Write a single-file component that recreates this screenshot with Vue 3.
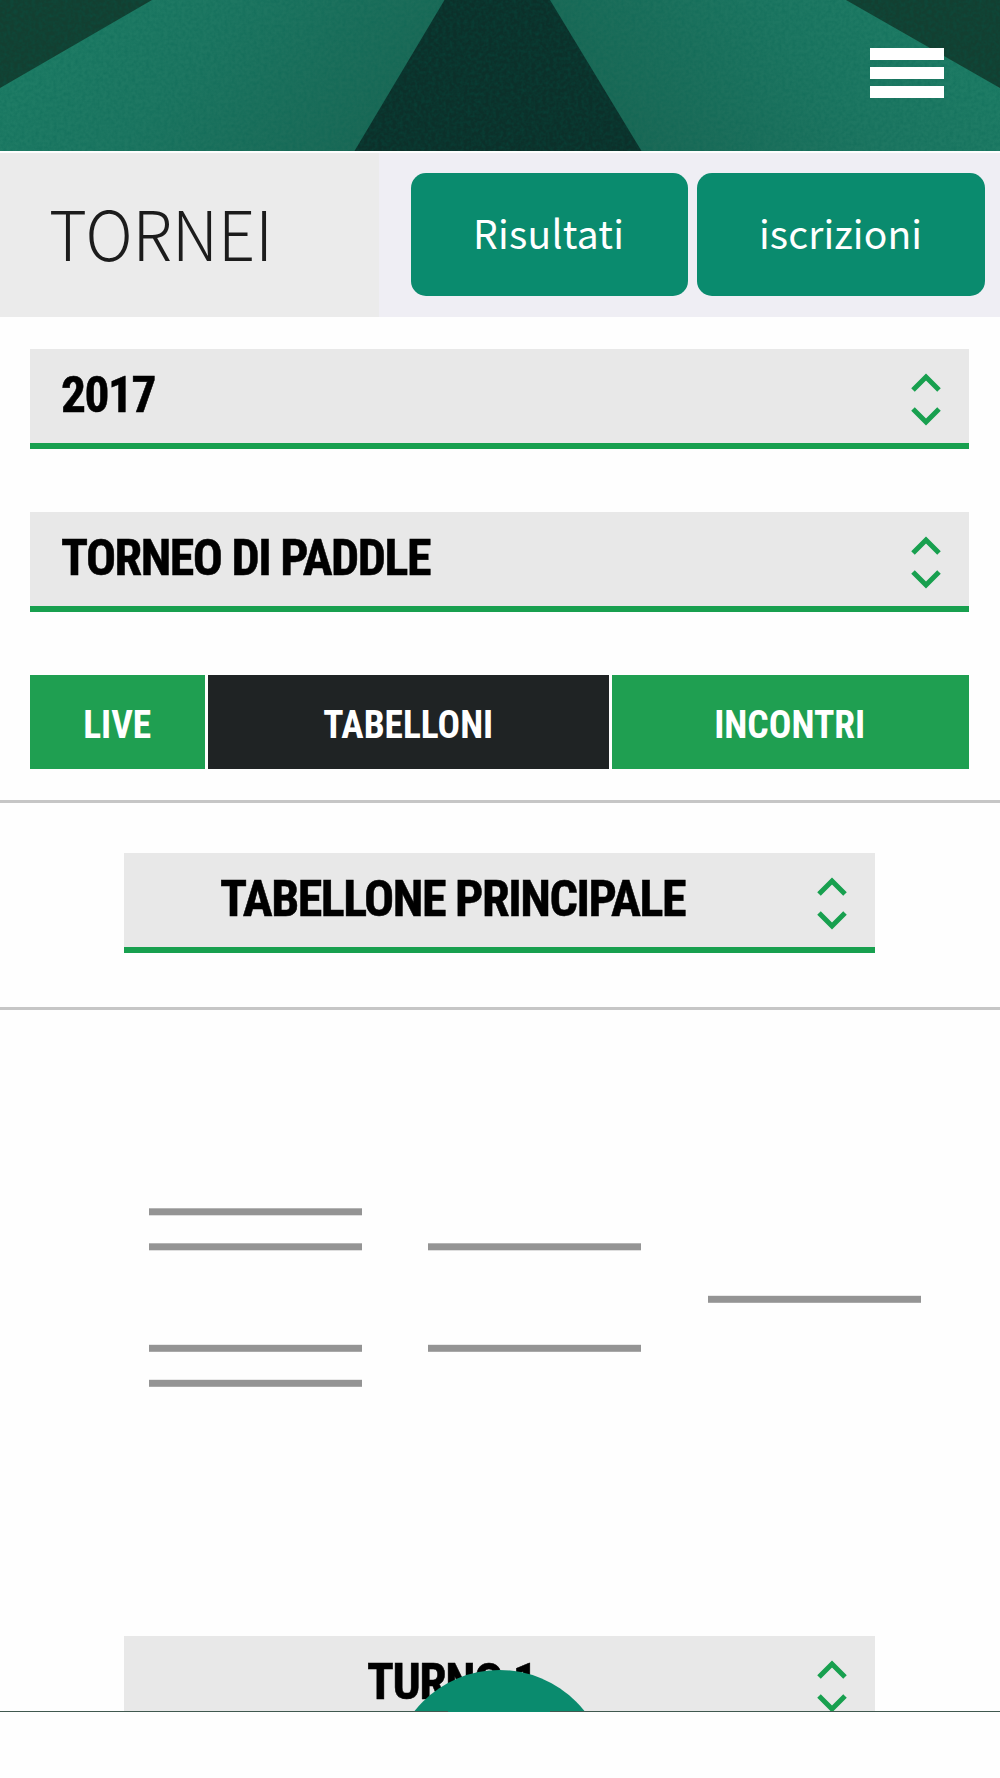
<template>
  <div class="page">
    <div class="screen">
      <!-- header with the court picture -->
      <header class="header">
        <svg class="court" viewBox="0 0 1000 151" preserveAspectRatio="none">
          <defs>
            <linearGradient id="leftPanel" x1="0" y1="0" x2="1" y2="0.25">
              <stop offset="0" stop-color="#1f7f67" />
              <stop offset="0.45" stop-color="#1e7762" />
              <stop offset="1" stop-color="#1b6654" />
            </linearGradient>
            <linearGradient id="rightPanel" x1="1" y1="0" x2="0" y2="0.25">
              <stop offset="0" stop-color="#1f7f67" />
              <stop offset="0.45" stop-color="#1e7762" />
              <stop offset="1" stop-color="#1b6654" />
            </linearGradient>
            <filter id="grain" x="0" y="0" width="100%" height="100%">
              <feTurbulence type="fractalNoise" baseFrequency="0.28" numOctaves="2" seed="4" />
              <feColorMatrix values="0 0 0 0 0  0 0 0 0 0.12  0 0 0 0 0.08  0.9 0 0 0 -0.3" />
            </filter>
          </defs>
          <rect width="500" height="151" fill="url(#leftPanel)" />
          <rect x="500" width="500" height="151" fill="url(#rightPanel)" />
          <path d="M0 0H152L0 88Z" fill="#133f31" />
          <path d="M846 0H1000V88Z" fill="#133f31" />
          <path d="M444.500 0H550L641.500 151H354.500Z" fill="#0c302a" />
          <rect width="1000" height="151" filter="url(#grain)" opacity="0.6" />
        </svg>
        <button class="burger" aria-label="Menu">
          <span></span>
          <span></span>
          <span></span>
        </button>
      </header>

      <!-- title and main actions -->
      <section class="title-bar">
        <div class="title">
          <svg class="title-text" width="250" height="106">
            <text x="3" y="80" textLength="224" lengthAdjust="spacingAndGlyphs">TORNEI</text>
          </svg>
        </div>
        <div class="actions">
          <button class="action results">
            <svg width="156" height="68"><text x="2" y="48" textLength="151">Risultati</text></svg>
          </button>
          <button class="action signup">
            <svg width="166" height="68"><text x="1" y="48" textLength="163">iscrizioni</text></svg>
          </button>
        </div>
      </section>

      <!-- filters -->
      <section class="filters">
        <div v-for="f in filters" :key="f.label" class="select">
          <svg class="select-text" :width="f.width + 8" height="74">
            <text x="0" y="55.5" :textLength="f.width" lengthAdjust="spacingAndGlyphs">{{ f.label }}</text>
          </svg>
          <svg class="arrows" viewBox="0 0 30 51"><path d="M2 16L15 3L28 16M2 35L15 48L28 35" /></svg>
        </div>
      </section>

      <!-- tabs -->
      <nav class="tabs">
        <button
          v-for="t in tabs"
          :key="t.label"
          class="tab"
          :class="[t.cls, { active: current === t.label }]"
          @click="current = t.label"
        >
          <svg :width="t.width + 6" height="58">
            <text x="2.2" y="44.5" :textLength="t.width" lengthAdjust="spacingAndGlyphs">{{ t.label }}</text>
          </svg>
        </button>
      </nav>

      <section class="board">
        <div class="select centered">
          <svg class="select-text" width="474" height="74">
            <text x="0" y="55.5" textLength="465" lengthAdjust="spacingAndGlyphs">TABELLONE PRINCIPALE</text>
          </svg>
          <svg class="arrows" viewBox="0 0 30 51"><path d="M2 16L15 3L28 16M2 35L15 48L28 35" /></svg>
        </div>
      </section>

      <!-- empty draw: one line for each slot -->
      <svg class="bracket" viewBox="0 0 1000 626">
        <rect v-for="(s, i) in slots" :key="i" :x="s[0]" :y="s[1]" width="213" height="7" />
      </svg>

      <div class="select centered round">
        <svg class="select-text" width="178" height="74">
          <text x="0" y="55.5" textLength="169" lengthAdjust="spacingAndGlyphs">TURNO 1</text>
        </svg>
        <svg class="arrows" viewBox="0 0 30 51"><path d="M2 16L15 3L28 16M2 35L15 48L28 35" /></svg>
      </div>

      <div class="fab"></div>
    </div>
    <div class="edge"></div>
  </div>
</template>

<script setup>
import { ref } from 'vue'

const current = ref('TABELLONI')

const filters = [
  { label: '2017', width: 94 },
  { label: 'TORNEO DI PADDLE', width: 369 }
]

const tabs = [
  { label: 'LIVE', cls: 'live', width: 68 },
  { label: 'TABELLONI', cls: 'draws', width: 170 },
  { label: 'INCONTRI', cls: 'matches', width: 151 }
]

// x, y of every slot line in the draw
const slots = [
  [149, 198.3],
  [149, 233.3],
  [149, 334.8],
  [149, 369.8],
  [428, 233.3],
  [428, 334.8],
  [708, 285.8]
]
</script>

<style>
body {
  margin: 0;
  background: #fefefe;
}
</style>

<style scoped>
* {
  box-sizing: border-box;
}
.page {
  width: 1000px;
  height: 1778px;
  background: #fefefe;
  overflow: hidden;
}
.screen {
  position: relative;
  height: 1711px;
  overflow: hidden;
}
button {
  border: 0;
  padding: 0;
  cursor: pointer;
}
svg {
  display: block;
  flex: none;
  overflow: visible;
}

/* header */
.header {
  position: relative;
  height: 151px;
}
.court {
  width: 100%;
  height: 100%;
  overflow: hidden;
}
.burger {
  position: absolute;
  top: 48px;
  right: 56px;
  width: 74px;
  display: flex;
  flex-direction: column;
  gap: 7px;
  background: none;
}
.burger span {
  height: 12px;
  background: #fff;
}

/* title */
.title-bar {
  display: flex;
  height: 164px;
  margin-top: 2px;
}
.title {
  width: 379px;
  padding: 28px 0 0 46px;
  background: #ebebeb;
}
.title-text text {
  font-family: "Noto Sans CJK SC", sans-serif;
  font-size: 68px;
  font-weight: 200;
  fill: #1c1c1c;
}
.actions {
  flex: 1;
  display: flex;
  gap: 9px;
  padding: 20px 15px 0 32px;
  background: #efeef4;
}
.action {
  display: flex;
  align-items: center;
  justify-content: center;
  height: 123px;
  border-radius: 15px;
  background: #0a8b6e;
}
.action text {
  font-family: "Noto Sans CJK SC", sans-serif;
  font-size: 39px;
  fill: #fff;
}
.results {
  width: 276.500px;
}
.signup {
  width: 288px;
}

/* selects */
.filters {
  padding: 32px 31px 0 30px;
}
.select {
  display: flex;
  justify-content: space-between;
  height: 100px;
  margin-bottom: 63px;
  padding: 7px 28px 0 31px;
  background: #e8e8e8;
  border-bottom: 6px solid #18a04f;
}
.select text {
  font-family: "Roboto Condensed", Roboto, sans-serif;
  font-stretch: 75%;
  font-size: 50px;
  font-weight: 700;
  letter-spacing: -1.5px;
  fill: #000;
  stroke: #000;
  stroke-width: 0.5px;
}
.arrows {
  width: 30px;
  height: 51px;
  margin-top: 17.500px;
}
.arrows path {
  fill: none;
  stroke: #18a04f;
  stroke-width: 5;
}

/* tabs */
.tabs {
  display: flex;
  gap: 3px;
  margin: 0 31px 0 30px;
}
.tab {
  display: flex;
  align-items: center;
  justify-content: center;
  height: 94px;
  background: #1f9f51;
}
.tab.active {
  background: #1f2324;
}
.tab text {
  font-family: "Roboto Condensed", Roboto, sans-serif;
  font-stretch: 75%;
  font-size: 38px;
  font-weight: 700;
  fill: #fff;
}
.live {
  width: 175px;
}
.draws {
  width: 401px;
}
.matches {
  width: 357px;
}

/* board */
.board {
  height: 210px;
  margin-top: 31px;
  padding-top: 50px;
  border-top: 3px solid #c6c6c6;
  border-bottom: 3px solid #c6c6c6;
}
.centered {
  width: 751.500px;
  margin: 0 0 0 123.500px;
  padding-left: 96.500px;
}
.bracket {
  width: 1000px;
  height: 626px;
}
.bracket rect {
  fill: #949494;
}
.round {
  padding-left: 243.500px;
}
.fab {
  position: absolute;
  top: 1670px;
  left: 391px;
  width: 217px;
  height: 217px;
  border-radius: 50%;
  background: #0a8b6e;
}
.edge {
  height: 1px;
  background: linear-gradient(to right, #40584f 0 448px, #0a8b6e 448px 550px, #40584f 550px);
}
</style>
